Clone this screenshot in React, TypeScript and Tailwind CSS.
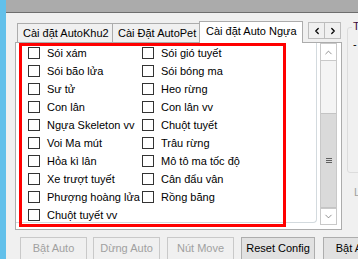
import { ChevronLeft, ChevronRight, ChevronUp, ChevronDown } from 'lucide-react';

const LEFT = ['Sói xám', 'Sói bão lửa', 'Sư tử', 'Con lân', 'Ngựa Skeleton vv', 'Voi Ma mút', 'Hỏa kì lân', 'Xe trượt tuyết', 'Phượng hoàng lửa', 'Chuột tuyết vv'];
const RIGHT = ['Sói gió tuyết', 'Sói bóng ma', 'Heo rừng', 'Con lân vv', 'Chuột tuyết', 'Trâu rừng', 'Mô tô ma tốc độ', 'Cân đẩu vân', 'Rồng băng'];

function Check({ label }: { label: string }) {
    return (
        <div className="flex items-center h-[18px] gap-[7px] whitespace-nowrap">
            <span className="w-[12px] h-[12px] border border-[#333333] bg-white shrink-0" />
            <span className="leading-[13px] text-black">{label}</span>
        </div>
    );
}

function Btn({ label, enabled, w, ml }: { label: string; enabled?: boolean; w: string; ml: string }) {
    return (
        <div className={`${w} ${ml} h-[23px] shrink-0 flex items-center justify-center border whitespace-nowrap leading-none ${enabled ? 'bg-[#e1e1e1] border-[#adadad] text-black' : 'bg-[#f0f0f0] border-[#c9c9c9] text-[#a0a0a0]'}`}>
            {label}
        </div>
    );
}

export default function App() {
    return (
        <div className="w-[358px] h-[259px] overflow-hidden flex bg-[#f0f0f0] text-[11px] font-['Liberation_Sans',Arial,sans-serif]">
            <div className="w-[6px] shrink-0 bg-[#62c0ea]" />
            <div className="flex-1 flex flex-col min-w-0">
                <div className="h-[13px] shrink-0 bg-[#ababab] border-b border-[#6e6e6e]" />

                <div className="flex pl-[9px] pt-[8px]">
                    {/* tab control */}
                    <div className="w-[327px] shrink-0 flex flex-col">
                        <div className="h-[21px] flex items-end pl-[2px]">
                            <div className="w-[96px] h-[19px] border border-b-0 border-[#acacac] pl-[5px] flex items-center leading-none whitespace-nowrap">
                                Cài đặt AutoKhu2
                            </div>
                            <div className="w-[88px] h-[19px] border border-l-0 border-b-0 border-[#acacac] pl-[5px] flex items-center leading-none whitespace-nowrap">
                                Cài Đặt AutoPet
                            </div>
                            <div className="relative z-10 -ml-[2px] -mb-px w-[104px] h-[22px] bg-white border border-b-0 border-[#acacac] pl-[6px] pb-[2px] flex items-center leading-none whitespace-nowrap">
                                Cài đặt Auto Ngựa
                            </div>
                            <div className="ml-auto mr-[1px] self-start mt-[1px] flex">
                                <div className="w-[17px] h-[17px] border border-[#bdbdbd] bg-[#f0f0f0] flex items-center justify-center">
                                    <ChevronLeft className="w-[10px] h-[10px] text-black" strokeWidth={3} />
                                </div>
                                <div className="-ml-px w-[17px] h-[17px] border border-[#bdbdbd] bg-[#f0f0f0] flex items-center justify-center">
                                    <ChevronRight className="w-[10px] h-[10px] text-black" strokeWidth={3} />
                                </div>
                            </div>
                        </div>

                        <div className="h-[188px] border border-[#acacac] bg-white flex items-start">
                            <div className="relative w-[301px] h-[180px] shrink-0 border-r border-b border-[#d3dade] rounded-br-[4px] pl-[12px] pt-[1px]">
                                <div className="grid grid-cols-[114px_114px]">
                                    <div className="flex flex-col">
                                        {LEFT.map((l) => <Check key={l} label={l} />)}
                                    </div>
                                    <div className="flex flex-col">
                                        {RIGHT.map((l) => <Check key={l} label={l} />)}
                                    </div>
                                </div>
                                <div className="absolute left-[3px] top-0 w-[267px] h-[184px] border-[3px] border-[#ff0000]" />
                            </div>

                            <div className="ml-[3px] w-[17px] h-[182px] shrink-0 flex flex-col border border-[#c9c9c9] bg-[#f4f4f4]">
                                <div className="h-[17px] bg-white border-b border-[#c9c9c9] flex items-center justify-center">
                                    <ChevronUp className="w-[11px] h-[11px] text-[#606060]" strokeWidth={1.5} />
                                </div>
                                <div className="h-[52px]" />
                                <div className="h-[95px] bg-[#dadada] border-y border-[#c4c4c4] flex flex-col items-center justify-center gap-[1px]">
                                    <span className="w-[6px] h-px bg-[#606060]" />
                                    <span className="w-[6px] h-px bg-[#606060]" />
                                    <span className="w-[6px] h-px bg-[#606060]" />
                                </div>
                                <div className="flex-1 bg-white border-t border-[#c9c9c9] flex items-center justify-center">
                                    <ChevronDown className="w-[11px] h-[11px] text-[#606060]" strokeWidth={1.5} />
                                </div>
                            </div>
                        </div>
                    </div>

                    {/* right side */}
                    <div className="ml-[5px] flex flex-col shrink-0">
                        <div className="relative mt-[6px] w-[40px] h-[146px] border border-[#dcdcdc] rounded-[3px]">
                            <span className="absolute -top-[7px] left-[4px] px-[1px] bg-[#f0f0f0] leading-none text-[#3b0a3b]">Tùy</span>
                            <div className="pl-[5px] pt-[11px] leading-none text-black">-</div>
                        </div>
                        <div className="mt-[14px] pl-[7px] leading-none text-[#a0a0a0]">Lưu</div>
                    </div>
                </div>

                <div className="flex mt-[7px] pl-[14px]">
                    <Btn label="Bật Auto" w="w-[67px]" ml="ml-0" />
                    <Btn label="Dừng Auto" w="w-[67px]" ml="ml-[6px]" />
                    <Btn label="Nút Move" w="w-[67px]" ml="ml-[7px]" />
                    <Btn label="Reset Config" enabled w="w-[74px]" ml="ml-[7px]" />
                    <Btn label="Bật Auto" enabled w="w-[67px]" ml="ml-[8px]" />
                </div>
            </div>
        </div>
    );
}
